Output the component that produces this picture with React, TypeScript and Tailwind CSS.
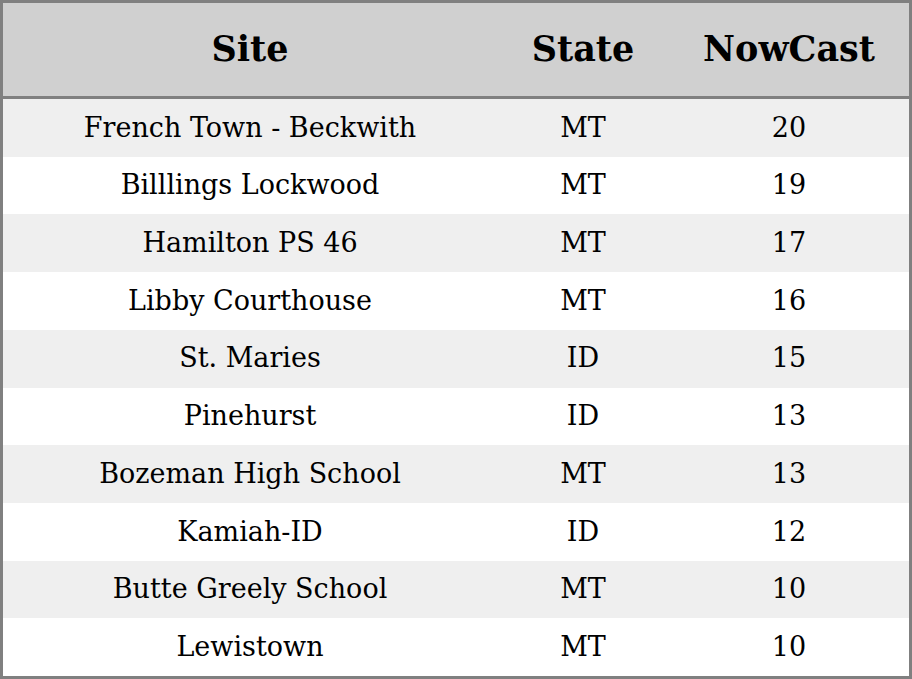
const rows = [
  { site: 'French Town - Beckwith', state: 'MT', value: 20 },
  { site: 'Billlings Lockwood', state: 'MT', value: 19 },
  { site: 'Hamilton PS 46', state: 'MT', value: 17 },
  { site: 'Libby Courthouse', state: 'MT', value: 16 },
  { site: 'St. Maries', state: 'ID', value: 15 },
  { site: 'Pinehurst', state: 'ID', value: 13 },
  { site: 'Bozeman High School', state: 'MT', value: 13 },
  { site: 'Kamiah-ID', state: 'ID', value: 12 },
  { site: 'Butte Greely School', state: 'MT', value: 10 },
  { site: 'Lewistown', state: 'MT', value: 10 },
];

export default function App() {
  return (
    <div
      className="w-[912px] h-[679px] bg-white border-[3px] border-[#808080] flex flex-col text-black"
      style={{ fontFamily: '"DejaVu Serif", serif' }}
    >
      <div className="grid grid-cols-[494px_172px_1fr] h-[96px] shrink-0 bg-[#d0d0d0] border-b-[3px] border-[#808080] items-center text-center text-[35px] font-bold">
        <div>Site</div>
        <div>State</div>
        <div>NowCast</div>
      </div>
      {rows.map((r, i) => (
        <div
          key={i}
          className={`grid grid-cols-[494px_172px_1fr] flex-1 items-center text-center text-[27px] ${
            i % 2 === 0 ? 'bg-[#efefef]' : 'bg-white'
          }`}
        >
          <div>{r.site}</div>
          <div>{r.state}</div>
          <div>{r.value}</div>
        </div>
      ))}
    </div>
  );
}
